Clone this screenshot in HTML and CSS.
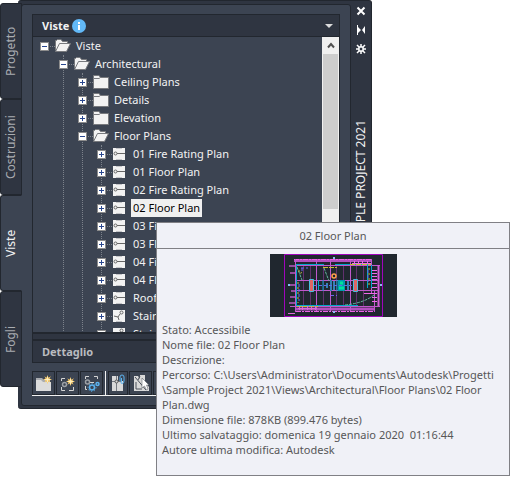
FILE: index.html
```html
<!DOCTYPE html>
<html lang="it">
<head>
    <meta charset="UTF-8">
    <meta name="viewport" content="width=device-width, initial-scale=1.0">
    <title>Project Navigator</title>
    <link rel="stylesheet" href="styles.css">
</head>
<body>
    <!-- Shared icons -->
    <svg class="sprite" aria-hidden="true">
        <symbol id="folder" viewBox="0 0 16 14">
            <path d="M0.5 3.5V0.5H6L7.5 2.5H15.5V13.5H0.5Z" fill="#f2f2f2" stroke="#77797d"/>
            <path d="M1 3.5H6L7.5 2.5" fill="none" stroke="#77797d"/>
        </symbol>
        <symbol id="folder-open" viewBox="0 0 16 14">
            <path d="M0.5 11V1.5H1.5L2.5 0.5H6L7.5 2.5H12.5V5" fill="#f2f2f2" stroke="#77797d"/>
            <path d="M0.5 12.5L4.5 4.5H15.5L11.5 12.5Z" fill="#f2f2f2" stroke="#77797d"/>
        </symbol>
        <symbol id="view" viewBox="0 0 16 14">
            <path d="M1 1H13V13H1Z" fill="#f2f2f2"/>
            <path d="M4 1.5H10M4 12.5H10" stroke="#c4c5c8" fill="none"/>
            <path d="M5 6.5H13" stroke="#666" fill="none"/>
            <circle cx="3.5" cy="6.5" r="1.5" fill="#f2f2f2" stroke="#666"/>
        </symbol>
        <symbol id="stair" viewBox="0 0 16 14">
            <path d="M1 1H13V13H1Z" fill="#f2f2f2"/>
            <path d="M4 12.5H10" stroke="#c4c5c8" fill="none"/>
            <path d="M8 5L6 8M2 7L6 8L7 11" stroke="#666" fill="none"/>
            <circle cx="9.500" cy="3.500" r="1.500" fill="#f2f2f2" stroke="#666"/>
        </symbol>
        <symbol id="star" viewBox="0 0 10 10">
            <path d="M5 0L6 3L9 1.500L7 4L10 5L7 6L8.500 8.500L6 7L5 10L4 7L1.500 8.500L3 6L0 5L3 4L1.500 1.500L4 3Z" fill="#ffd06b"/>
            <path d="M5 2V8M2 5H8" stroke="#fff0c4"/>
        </symbol>
    </svg>

    <div class="palette">
        <nav class="tabs">
            <button class="tab">Progetto</button>
            <button class="tab">Costruzioni</button>
            <button class="tab active">Viste</button>
            <button class="tab">Fogli</button>
        </nav>

        <div class="frame">
            <main class="content">
                <section class="box">
                    <header class="box-header">
                        <h2>Viste</h2>
                        <button class="info" aria-label="Info">
                            <svg width="14" height="14" viewBox="0 0 14 14"><circle cx="7" cy="7" r="7" fill="#62b9f8"/><path d="M6 3h2v2H6zM6 6h2v5H6z" fill="#fff"/></svg>
                        </button>
                        <button class="collapse" aria-label="Comprimi">
                            <svg width="8" height="4" viewBox="0 0 8 4"><path d="M0 0H8L4 4Z" fill="#dcdcdc"/></svg>
                        </button>
                    </header>
                    <div class="tree-area">
                        <ul class="tree">
                            <li>
                                <div class="row"><button class="toggle" aria-label="Comprimi"></button><svg class="icon"><use href="#folder-open"/></svg><span>Viste</span></div>
                                <ul>
                                    <li>
                                        <div class="row"><button class="toggle" aria-label="Comprimi"></button><svg class="icon"><use href="#folder-open"/></svg><span>Architectural</span></div>
                                        <ul>
                                            <li class="row"><button class="toggle plus" aria-label="Espandi"></button><svg class="icon"><use href="#folder"/></svg><span>Ceiling Plans</span></li>
                                            <li class="row"><button class="toggle plus" aria-label="Espandi"></button><svg class="icon"><use href="#folder"/></svg><span>Details</span></li>
                                            <li class="row"><button class="toggle plus" aria-label="Espandi"></button><svg class="icon"><use href="#folder"/></svg><span>Elevation</span></li>
                                            <li>
                                                <div class="row"><button class="toggle" aria-label="Comprimi"></button><svg class="icon"><use href="#folder-open"/></svg><span>Floor Plans</span></div>
                                                <ul>
                                                    <li class="row"><button class="toggle plus" aria-label="Espandi"></button><svg class="icon"><use href="#view"/></svg><span>01 Fire Rating Plan</span></li>
                                                    <li class="row"><button class="toggle plus" aria-label="Espandi"></button><svg class="icon"><use href="#view"/></svg><span>01 Floor Plan</span></li>
                                                    <li class="row"><button class="toggle plus" aria-label="Espandi"></button><svg class="icon"><use href="#view"/></svg><span>02 Fire Rating Plan</span></li>
                                                    <li class="row"><button class="toggle plus" aria-label="Espandi"></button><svg class="icon"><use href="#view"/></svg><span class="selected">02 Floor Plan</span></li>
                                                    <li class="row"><button class="toggle plus" aria-label="Espandi"></button><svg class="icon"><use href="#view"/></svg><span>03 Fire Rating Plan</span></li>
                                                    <li class="row"><button class="toggle plus" aria-label="Espandi"></button><svg class="icon"><use href="#view"/></svg><span>03 Floor Plan</span></li>
                                                    <li class="row"><button class="toggle plus" aria-label="Espandi"></button><svg class="icon"><use href="#view"/></svg><span>04 Fire Rating Plan</span></li>
                                                    <li class="row"><button class="toggle plus" aria-label="Espandi"></button><svg class="icon"><use href="#view"/></svg><span>04 Floor Plan</span></li>
                                                    <li class="row"><button class="toggle plus" aria-label="Espandi"></button><svg class="icon"><use href="#view"/></svg><span>Roof</span></li>
                                                    <li class="row"><button class="toggle plus" aria-label="Espandi"></button><svg class="icon"><use href="#stair"/></svg><span>Stair</span></li>
                                                    <li class="row"><button class="toggle plus" aria-label="Espandi"></button><svg class="icon"><use href="#stair"/></svg><span>Stair</span></li>
                                                </ul>
                                            </li>
                                        </ul>
                                    </li>
                                </ul>
                            </li>
                        </ul>
                        <div class="scrollbar">
                            <button class="scroll-up" aria-label="Scorri in alto">
                                <svg width="8" height="7" viewBox="0 0 8 7"><path d="M1 5.500L4 2L7 5.500" fill="none" stroke="#505050" stroke-width="2"/></svg>
                            </button>
                            <div class="thumb"></div>
                        </div>
                    </div>
                    <div class="splitter"></div>
                    <header class="box-header detail"><h2>Dettaglio</h2></header>
                </section>

                <div class="toolbar">
                    <button aria-label="Nuova categoria">
                        <svg width="18" height="18" viewBox="0 0 18 18"><path d="M1 4H7L9 6H15V8H1Z" fill="#a9acb1"/><path d="M1 6H6L8 8H16V17H1Z" fill="#dcdcdc"/><use href="#star" x="8" y="1" width="9" height="9"/></svg>
                    </button>
                    <button aria-label="Nuova vista">
                        <svg width="18" height="18" viewBox="0 0 18 18"><path d="M2.500 7V4.500H6M2.500 13V16.500H6M10 16.500H14.500V13" fill="none" stroke="#d4d4d4"/><circle cx="5.500" cy="10.500" r="2" fill="none" stroke="#9ca0a6" stroke-width="1.500"/><use href="#star" x="7" y="3" width="9" height="9"/></svg>
                    </button>
                    <button aria-label="Rigenera viste">
                        <svg width="18" height="18" viewBox="0 0 18 18"><path d="M2.500 5V2.500H6M11 2.500H14.500V5M2.500 12V15.500H4M6 8.500H11" fill="none" stroke="#d4d4d4"/><circle cx="4.500" cy="8" r="2" fill="none" stroke="#9ca0a6" stroke-width="1.500"/><circle cx="9" cy="13.500" r="2.500" fill="none" stroke="#5bb3f0" stroke-width="1.500"/><circle cx="9" cy="13.500" r="4" fill="none" stroke="#5bb3f0" stroke-dasharray="1 2"/><circle cx="14.500" cy="10" r="1.500" fill="none" stroke="#5bb3f0" stroke-width="1.500"/></svg>
                    </button>
                    <span class="separator"></span>
                    <button class="narrow" aria-label="Xrif">
                        <svg width="18" height="18" viewBox="0 0 18 18"><path d="M3 2H9V7H14V17H3Z" fill="#d9d9d9"/><path d="M7.500 2V17M3 7.500H12" stroke="#777b82"/><circle cx="7.500" cy="7.500" r="1.500" fill="#d9d9d9" stroke="#555"/><path d="M11 7V3Q11 1 13 1T15 3V7Q15 9.500 13 9.500T12.500 7V4" fill="none" stroke="#5bb3f0"/></svg>
                    </button>
                    <button aria-label="Seleziona">
                        <svg width="18" height="18" viewBox="0 0 18 18"><path d="M2 2H6L8 5V1H13V8L17 13V17H2Z" fill="#d9d9d9"/><path d="M3 3L14 16M4 8V15H10M8 2L6 6" fill="none" stroke="#4a505a"/><path d="M10 4V14L12.500 12L14.500 16L16 15L14.500 11H17Z" fill="#fff" stroke="#4a505a" stroke-width="0.500"/></svg>
                    </button>
                    <button aria-label="Aggiorna"></button>
                </div>
            </main>

            <aside class="titlebar">
                <button aria-label="Chiudi"><svg width="10" height="10" viewBox="0 0 10 10"><path d="M1.500 1.500L8.500 8.500M8.500 1.500L1.500 8.500" stroke="#fff" stroke-width="2"/></svg></button>
                <button aria-label="Nascondi automaticamente"><svg width="10" height="10" viewBox="0 0 10 10"><path d="M1 0H2V10H1ZM2 2L5 5L2 8ZM9 1V9L6 5Z" fill="#fff"/></svg></button>
                <button aria-label="Proprietà"><svg width="10" height="10" viewBox="0 0 10 10"><path d="M1 1L3 3M9 1L7 3M1 9L3 7M9 9L7 7M5 0V3M5 7V10M0 5H3M7 5H10" stroke="#fff" stroke-width="1.500"/><path d="M3 3H7V7H3Z" fill="none" stroke="#fff" stroke-width="1.500"/></svg></button>
                <h1>SAMPLE PROJECT 2021</h1>
            </aside>
        </div>
    </div>

    <!-- Tooltip of the selected view -->
    <div class="tooltip" role="tooltip">
        <h3>02 Floor Plan</h3>
        <svg class="preview" viewBox="0 0 127 63" role="img" aria-label="Anteprima">
            <path d="M0 0H127V63H0Z" fill="#20272f"/>
            <path d="M14.500 0.500H112.500V62.500H14.500Z" fill="none" stroke="#a004bd"/>
            <path d="M24 6.500H102M26 55H104" stroke="#b44fc0" stroke-width="3"/>
            <path d="M24 5.500H102M26 57.500H104" stroke="#ea63e5" stroke-dasharray="5 1 2 1"/>
            <path d="M33.500 11V52M40.500 11V52M53.500 11V52M66.500 11V52M73.500 11V52M86.500 11V52M93.500 11V52" stroke="#61316e"/>
            <path d="M46.500 6V57M60.500 6V57M80.500 6V57M25 26.500H108M25 36.500H108M20 11.500H110M20 52.500H110M25.500 5V58M101.500 5V40M104.500 36V58" stroke="#bf58cc" fill="none"/>
            <path d="M108.500 11V52" stroke="#d55cda" stroke-width="2"/>
            <path d="M102 16.500H107M102 19.500H107M102 22.500H107M102 25.500H107M102 29.500H107M102 33.500H107M94 39.500H107M102 43.500H107M102 47.500H107M82 9.500H101M84.500 7V11M88.500 7V11M92.500 7V11M97.500 7V11" stroke="#f06aea"/>
            <path d="M19 12H25M20 19H25M19 31H25M21 37H25M20 43H25M19 49H25" stroke="#934c9e" stroke-width="2"/>
            <path d="M26 10.500H54M65 10.500H101M26.500 11V52M27 51.500H88M53 26V37M67 26V37M48.500 26V36M97.500 11V34M101.500 11V34" fill="none" stroke="#00a8c8"/>
            <path d="M39.500 25.500H43.500V37.500H39.500ZM83.500 25.500H87.500V37.500H83.500Z" fill="#df6565" stroke="#4abce0"/>
            <path d="M68 26H75V37H68Z" fill="#009caf"/>
            <path d="M70 29H73M69 34H74" stroke="#00e49b" stroke-width="3"/>
            <path d="M61 26V37M64 27V36M57 29V34M78 27V36" stroke="#3483b5" stroke-width="2"/>
            <path d="M44 31.500H83" stroke="#626ce4" stroke-dasharray="3 2"/>
            <circle cx="64" cy="22" r="2" fill="none" stroke="#ffa04b" stroke-width="1.500"/>
            <path d="M53 13.500H67M27 52.500H48M80 10.500H101" stroke="#c8bf34" stroke-dasharray="5 1"/>
            <path d="M27 13L32 26M54 14L59 27M75 51Q94 49 104 41" fill="none" stroke="#64b99e" stroke-dasharray="3 1"/>
            <path d="M28 17H32L30 21M28 28V49M99 14V32" fill="none" stroke="#c2bd44" stroke-dasharray="2 3"/>
            <path d="M31 14H38M29 30V47M98 16V28M61 41.500H67M32 14V17" stroke="#6b68f1" stroke-dasharray="3 2"/>
            <path d="M18 31H20M110 31H112M63 4H65M63 58H65" stroke="#8bbdf1" stroke-width="2"/>
            <path d="M28 54.500H47M29.500 52V56M32.500 52V56M37.500 52V56M41.500 52V56M45.500 52V56M18 59.500H25" stroke="#dc6bd7"/>
        </svg>
        <div class="details">
            <p>Stato: Accessibile</p>
            <p>Nome file: 02 Floor Plan</p>
            <p>Descrizione:</p>
            <p>Percorso: C:\Users\Administrator\Documents\Autodesk\Progetti<wbr>\Sample Project 2021\Views\Architectural\Floor Plans\02 Floor Plan.dwg</p>
            <p>Dimensione file: 878KB (899.476 bytes)</p>
            <p>Ultimo salvataggio: domenica 19 gennaio 2020&nbsp; 01:16:44</p>
            <p>Autore ultima modifica: Autodesk</p>
        </div>
    </div>
</body>
</html>
```
FILE: styles.css
```css
* {
    box-sizing: border-box;
}
body {
    margin: 0;
    background: #fff;
    font-family: "Noto Sans", "Open Sans", sans-serif;
    font-size: 11px;
    line-height: 18px;
    color: #f2f2f2;
}
h1, h2, h3, p, ul {
    margin: 0;
    padding: 0;
}
button {
    padding: 0;
    border: none;
    background: none;
    color: inherit;
    font: inherit;
}
svg {
    display: block;
}
.sprite {
    display: none;
}

/* Palette */
.palette {
    display: flex;
    align-items: flex-start;
    width: 73%;
}
.tabs {
    position: relative;
    z-index: 1;
    width: 22px;
    margin-top: 3px;
    margin-right: -4px;
}
.tab {
    display: block;
    width: 100%;
    height: 96px;
    border: 1px solid #22272f;
    border-radius: 0 3px 3px 0;
    background: #2f3541;
    color: #a9acb1;
    font-size: 12px;
    writing-mode: vertical-rl;
    transform: rotate(180deg);
}
.tab.active {
    border-left-color: #3c4452;
    background: #3c4452;
    color: #f2f2f2;
}
.frame {
    flex: 1;
    display: flex;
    min-width: 0;
    padding: 3px 0 2px 3px;
    border: 1px solid #22272f;
    border-left: none;
    border-radius: 3px;
    background: #2f3541;
}
.content {
    flex: 1;
    min-width: 0;
    padding: 9px 10px;
    border: 1px solid #22272f;
    border-radius: 3px;
    background: #3c4452;
}

/* Tree box */
.box {
    border: 1px solid #22272f;
}
.box-header {
    display: flex;
    align-items: center;
    gap: 3px;
    height: 22px;
    padding: 0 9px;
    border-bottom: 1px solid #22272f;
    background: #2f3541;
}
.box-header h2 {
    font-size: 11px;
    font-weight: bold;
}
.collapse {
    margin-left: auto;
    margin-right: -3px;
}
.box-header.detail {
    height: 21px;
    border-bottom: none;
    color: #b9bbbf;
}
.tree-area {
    display: flex;
    height: 295px;
    overflow: hidden;
}
.tree {
    flex: 1;
    padding-left: 12px;
}
.tree ul {
    margin-left: 18px;
    border-left: 1px dotted #7c828b;
}
.tree li {
    list-style: none;
}
.row {
    display: flex;
    align-items: center;
    height: 18px;
    margin-left: -5px;
    white-space: nowrap;
}
.row span {
    margin-left: 3px;
    padding: 0 2px;
}
.row .selected {
    background: #f0f0f0;
    color: #000;
}
.toggle {
    position: relative;
    width: 9px;
    height: 9px;
    border: 1px solid #8c8c8c;
    background: linear-gradient(#29478f, #29478f) center / 5px 1px no-repeat #fff;
}
.toggle.plus {
    background: linear-gradient(#29478f, #29478f) center / 5px 1px no-repeat, linear-gradient(#29478f, #29478f) center / 1px 5px no-repeat #fff;
}
.toggle::after {
    content: "";
    position: absolute;
    left: 9px;
    top: 3px;
    width: 5px;
    border-top: 1px dotted #7c828b;
}
.icon {
    width: 16px;
    height: 14px;
    margin-left: 6px;
}
.scrollbar {
    width: 17px;
    padding: 0 1px;
    background: #f0f0f0;
}
.scroll-up {
    display: flex;
    align-items: center;
    justify-content: center;
    width: 100%;
    height: 17px;
}
.thumb {
    height: 155px;
    background: #cdcdcd;
}
.splitter {
    height: 9px;
    border-top: 2px solid #22272f;
    border-bottom: 2px solid #22272f;
    background: #2f3541;
}

/* Toolbar */
.toolbar {
    display: flex;
    gap: 1px;
    margin-top: 8px;
    border-bottom: 1px solid #f2f2f2;
    overflow: hidden;
}
.toolbar button {
    display: flex;
    align-items: center;
    justify-content: center;
    width: 23px;
    height: 24px;
    border: 1px solid #22272f;
}
.toolbar .narrow {
    width: 20px;
}
.toolbar .separator {
    width: 1px;
    margin: 0 1px;
    background: #f2f2f2;
}

/* Title bar */
.titlebar {
    display: flex;
    flex-direction: column;
    align-items: center;
    gap: 9px;
    width: 20px;
    padding-top: 2px;
}
.titlebar h1 {
    margin-top: 57px;
    font-size: 12px;
    font-weight: normal;
    line-height: 14px;
    white-space: nowrap;
    writing-mode: vertical-rl;
    transform: rotate(180deg);
}

/* Tooltip */
.tooltip {
    position: absolute;
    z-index: 2;
    top: 222px;
    left: 156px;
    right: 0;
    padding-bottom: 18px;
    border: 1px solid #808085;
    background: #f0f1f7;
    color: #575757;
}
.tooltip h3 {
    padding: 4px 0 3px;
    border-bottom: 1px solid #808085;
    font-size: 11px;
    font-weight: normal;
    text-align: center;
}
.preview {
    width: 127px;
    height: 63px;
    margin: 5px auto;
}
.details {
    padding-left: 5px;
    line-height: 15px;
}
```
